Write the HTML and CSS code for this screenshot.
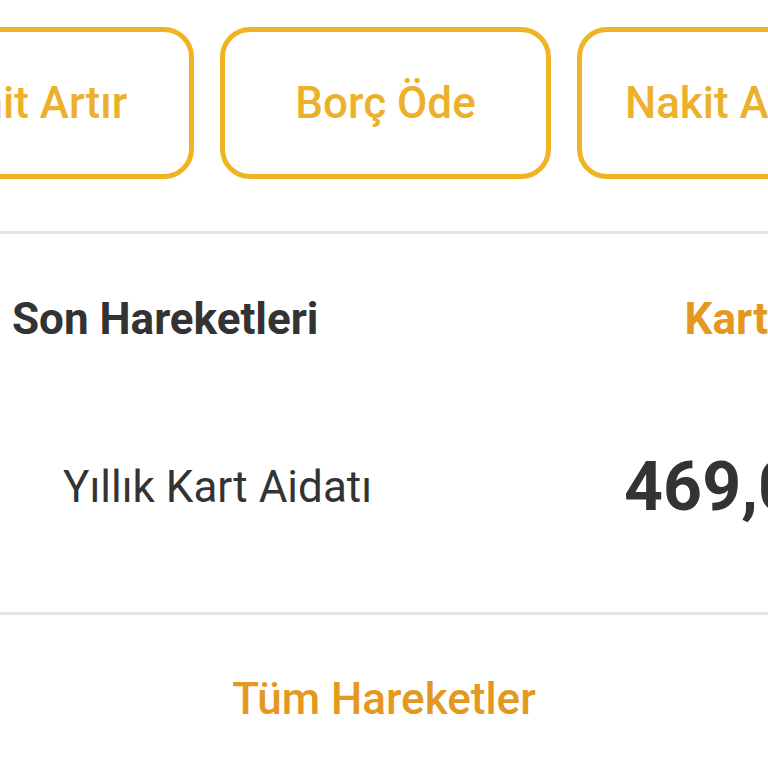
FILE: index.html
```html
<!DOCTYPE html>
<html lang="tr">
<head>
  <meta charset="utf-8">
  <title>Kart Hareketleri</title>
  <link rel="stylesheet" href="styles.css">
</head>
<body>
<div class="screen">

  <div class="actions">
    <button class="action">Limit Artır</button>
    <button class="action">Borç Öde</button>
    <button class="action">Nakit Avans</button>
  </div>

  <div class="section-head">
    <span class="title">Son Hareketleri</span>
    <a class="link">Kart Detayı</a>
  </div>

  <div class="tx">
    <span class="tx-name">Yıllık Kart Aidatı</span>
    <span class="tx-amount">469,00 TL</span>
  </div>

  <div class="all">
    <a class="link">Tüm Hareketler</a>
  </div>

</div>
</body>
</html>
```

FILE: styles.css
```css
html, body {
  margin: 0;
  background: #fff;
}

.screen {
  width: 768px;
  height: 768px;
  overflow: hidden;
  font-family: Roboto, "Liberation Sans", sans-serif;
  color: #333;
}

/* quick action buttons */
.actions {
  display: flex;
  gap: 26px;
  margin-left: -137px;
  padding-top: 27px;
  padding-bottom: 52px;
  border-bottom: 3px solid #e4e4e4;
}

.action {
  flex: 0 0 331px;
  height: 152px;
  box-sizing: border-box;
  border: 5px solid #f0b323;
  border-radius: 30px;
  background: #fff;
  color: #ecb12b;
  font-family: inherit;
  font-size: 44px;
  font-weight: 500;
  white-space: nowrap;
  padding: 0;
}

.section-head {
  display: flex;
  gap: 366px;
  padding: 59px 0 0 12px;
  height: 111px;
  white-space: nowrap;
}

.title {
  font-size: 44px;
  font-weight: 700;
}

.link {
  color: #e3981f;
  font-size: 44px;
  font-weight: 700;
}

.tx {
  display: flex;
  align-items: center;
  gap: 252px;
  padding-left: 63px;
  padding-bottom: 42px;
  height: 166px;
  white-space: nowrap;
  border-bottom: 3px solid #e4e4e4;
}

.tx-name {
  font-size: 44px;
  font-weight: 400;
}

.tx-amount {
  font-size: 68px;
  font-weight: 700;
}

.all {
  display: flex;
  justify-content: center;
  padding-top: 58px;
}

.all .link {
  font-weight: 500;
}
```
